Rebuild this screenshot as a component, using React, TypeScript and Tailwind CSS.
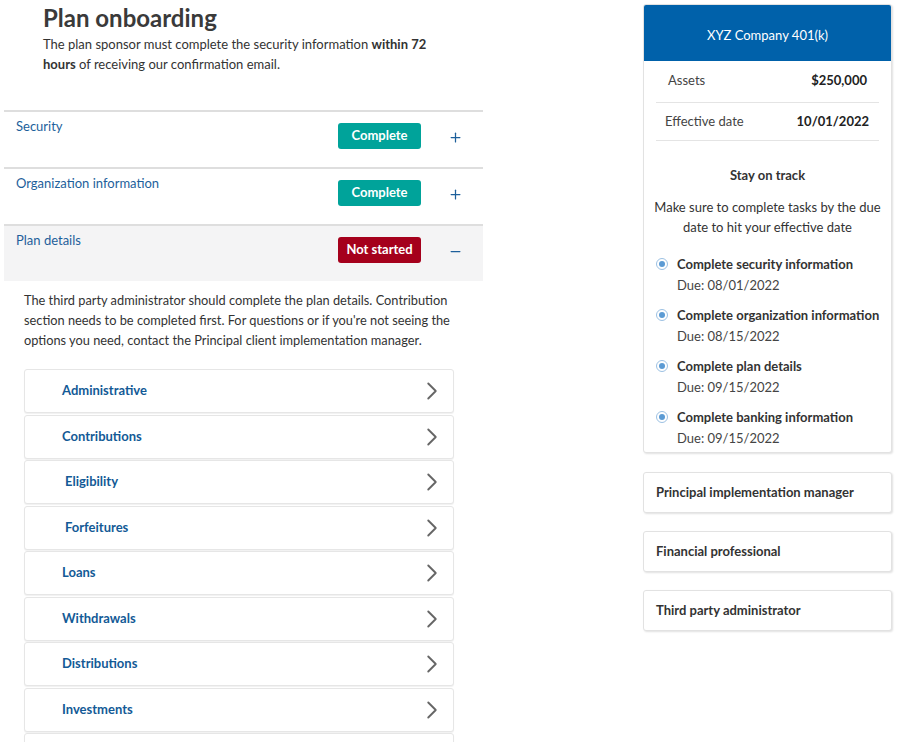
import { ChevronRight, Plus, Minus } from 'lucide-react';

const sections = [
    { title: 'Security', status: 'Complete', open: false },
    { title: 'Organization information', status: 'Complete', open: false },
    { title: 'Plan details', status: 'Not started', open: true },
];

// last row is cut off by the bottom of the page
const items = [
    { label: 'Administrative', pad: 'pl-[37px]' },
    { label: 'Contributions', pad: 'pl-[37px]' },
    { label: 'Eligibility', pad: 'pl-[40px]' },
    { label: 'Forfeitures', pad: 'pl-[40px]' },
    { label: 'Loans', pad: 'pl-[37px]' },
    { label: 'Withdrawals', pad: 'pl-[37px]' },
    { label: 'Distributions', pad: 'pl-[37px]' },
    { label: 'Investments', pad: 'pl-[37px]' },
    { label: '', pad: 'pl-[37px]' },
];

const tasks = [
    { title: 'Complete security information', due: '08/01/2022' },
    { title: 'Complete organization information', due: '08/15/2022' },
    { title: 'Complete plan details', due: '09/15/2022' },
    { title: 'Complete banking information', due: '09/15/2022' },
];

const contacts = ['Principal implementation manager', 'Financial professional', 'Third party administrator'];

function StatusBadge({ status }: { status: string }) {
    const done = status === 'Complete';
    return (
        <span
            className={
                'flex h-[26px] w-[83px] shrink-0 items-center justify-center rounded-[3px] text-[13px] font-bold text-white ' +
                (done ? 'bg-[#00a39a]' : 'bg-[#a5001c]')
            }
        >
            {status}
        </span>
    );
}

function RadioDot() {
    return (
        <span className="mt-[4px] flex h-[12px] w-[12px] shrink-0 items-center justify-center rounded-full border border-[#9cc1e3] bg-white">
            <span className="h-[6px] w-[6px] rounded-full bg-[#5c9bd4]" />
        </span>
    );
}

export default function App() {
    return (
        <div className="flex h-[742px] w-[900px] overflow-hidden bg-white pl-[4px] text-[#333] font-['Lato','Liberation_Sans',sans-serif]">
            {/* Left column */}
            <div className="w-[479px] shrink-0">
                <div className="h-[110px] pl-[39px] pt-[3px]">
                    <h1 className="text-[24px] font-bold leading-[30px] text-[#3a3a3a]">Plan onboarding</h1>
                    <p className="mt-[1px] w-[390px] text-[13px] leading-[20px] text-[#333]">
                        The plan sponsor must complete the security information <b>within 72 hours</b> of receiving our
                        confirmation email.
                    </p>
                </div>

                {sections.map(s => (
                    <div
                        key={s.title}
                        className={
                            'flex h-[57px] items-start border-t-2 border-[#dedede] pt-[11px] ' +
                            (s.open ? 'bg-[#f4f4f5]' : 'bg-white')
                        }
                    >
                        <div className="mt-[-7px] flex-1 pl-[12px] text-[13px] leading-[20px] text-[#1d5f9b]">{s.title}</div>
                        <StatusBadge status={s.status} />
                        <div className="flex w-[62px] justify-center pl-[6px] pt-[7px] text-[#1d5f9b]">
                            {s.open ? <Minus size={15} strokeWidth={2} /> : <Plus size={15} strokeWidth={2} />}
                        </div>
                    </div>
                ))}

                <p className="mt-[9px] pl-[20px] pr-[6px] text-[12.8px] leading-[20px] text-[#333]">
                    The third party administrator should complete the plan details. Contribution section needs to be
                    completed first. For questions or if you're not seeing the options you need, contact the Principal
                    client implementation manager.
                </p>

                <div className="ml-[20px] mt-[19px] flex w-[430px] flex-col gap-[1.5px]">
                    {items.map((it, i) => (
                        <div
                            key={i}
                            className={
                                'flex h-[44px] shrink-0 items-center justify-between rounded-[3px] border border-[#e6e6e6] bg-white pr-[6px] shadow-[0_1px_1px_rgba(0,0,0,0.06)] ' +
                                it.pad
                            }
                        >
                            <span className="text-[13px] font-bold text-[#135a96]">{it.label}</span>
                            <ChevronRight size={30} strokeWidth={1.5} className="text-[#666]" />
                        </div>
                    ))}
                </div>
            </div>

            {/* Right column */}
            <div className="ml-[160px] w-[249px] shrink-0 pt-[4px]">
                <div className="overflow-hidden rounded-[3px] border border-[#e2e2e2] bg-white pb-[4px] shadow-[1px_1px_2px_rgba(0,0,0,0.12)]">
                    <div className="flex h-[56px] items-center justify-center bg-[#0061aa] pt-[6px] text-[13px] text-white">
                        XYZ Company 401(k)
                    </div>
                    <div className="mx-[12px]">
                        <div className="flex h-[42px] items-center justify-between border-b border-[#e4e4e4] pb-[2px] pl-[12px] pr-[12px] text-[13px]">
                            <span className="text-[#444]">Assets</span>
                            <span className="font-bold text-[#222]">$250,000</span>
                        </div>
                        <div className="flex h-[38px] items-center justify-between border-b border-[#e4e4e4] pl-[9px] pr-[10px] text-[13px]">
                            <span className="text-[#444]">Effective date</span>
                            <span className="font-bold text-[#222]">10/01/2022</span>
                        </div>
                    </div>
                    <div className="mt-[24px] text-center text-[13px] font-bold leading-[20px] text-[#333]">Stay on track</div>
                    <p className="mx-auto mt-[12px] w-[230px] text-center text-[13px] leading-[20px] text-[#333]">
                        Make sure to complete tasks by the due date to hit your effective date
                    </p>
                    <div className="mt-[17px] flex flex-col gap-[10px] pl-[12px]">
                        {tasks.map(t => (
                            <div key={t.title} className="flex gap-[9px]">
                                <RadioDot />
                                <div className="text-[13px] leading-[20px]">
                                    <div className="font-bold text-[#333]">{t.title}</div>
                                    <div className="mt-[1px] text-[#444]">Due: {t.due}</div>
                                </div>
                            </div>
                        ))}
                    </div>
                </div>

                <div className="mt-[19px] flex flex-col gap-[18px]">
                    {contacts.map(c => (
                        <div
                            key={c}
                            className="flex h-[41px] items-center rounded-[3px] border border-[#e2e2e2] bg-white pl-[12px] text-[13px] font-bold text-[#333] shadow-[1px_1px_2px_rgba(0,0,0,0.12)]"
                        >
                            {c}
                        </div>
                    ))}
                </div>
            </div>
        </div>
    );
}
